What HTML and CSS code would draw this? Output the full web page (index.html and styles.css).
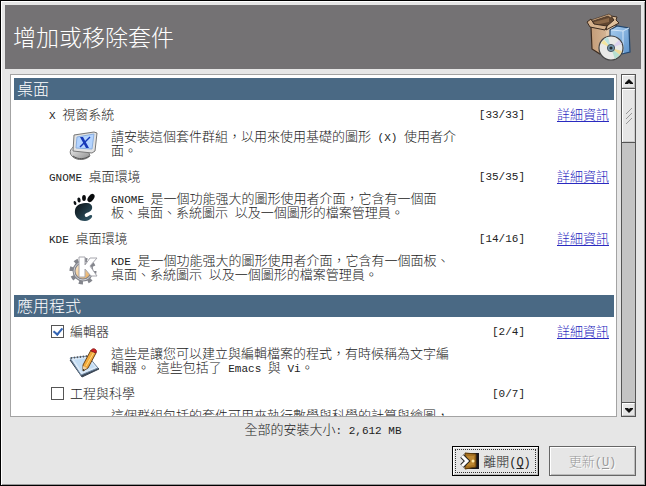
FILE: index.html
```html
<!DOCTYPE html>
<html lang="zh-TW">

<head>
  <meta charset="utf-8">
  <title>增加或移除套件</title>
  <link rel="stylesheet" href="styles.css">
</head>

<body>
  <main class="window">
    <header class="banner">
      <h1>增加或移除套件</h1>
      <svg class="banner-icon" viewBox="0 0 48 48" aria-hidden="true">
        <defs>
          <linearGradient id="box" x1="0" x2="1"><stop offset="0" stop-color="#c39c78"/><stop offset="1" stop-color="#dfc3a5"/></linearGradient>
          <linearGradient id="blue" x1="0" x2="1" y2="1"><stop offset="0" stop-color="#acd0f0"/><stop offset="1" stop-color="#5b92cc"/></linearGradient>
        </defs>
        <path d="M5 14 20 16 30 11 30 37 14 41 6 36Z" fill="url(#box)" stroke="#3d2c20" stroke-width="1.2"/>
        <path d="M20 17 29 12 29 30 20 36Z" fill="#dfc4a7"/>
        <path d="M5 8 23 2 30 8 20 15 5 13Z" fill="#60452f" stroke="#3d2c20"/>
        <path d="M8 9 23 5 23 9 9 12Z" fill="#8b6848"/>
        <path d="M1 9 5 6 8 11 21 13 19 17 4 14Z" fill="#d6b28d" stroke="#3d2c20"/>
        <path d="M21 13 28 7 25 3 31 4 30 7 33 10 20 17Z" fill="#e0c09b" stroke="#3d2c20"/>
        <path d="M5 7 23 1 26 3 25 5 22 3 7 8Z" fill="#cba680" stroke="#3d2c20" stroke-width=".6"/>
        <path d="M24 17 31 13 43 15 44 39 36 41 24 41Z" fill="url(#blue)" stroke="#23476e" stroke-width="1.2"/>
        <path d="M25 17 37 18 43 15M37 18V40" fill="none" stroke="#d2e5f7"/>
        <circle cx="25" cy="35" r="12" fill="#e9e9e7" stroke="#444" stroke-width="1.2"/>
        <path d="M25 35 15 30 18 27Z" fill="#f3e59e"/>
        <path d="M25 35 18 26 22 24Z" fill="#b9e2df"/>
        <path d="M25 35 33 27 36 31Z" fill="#dcd2ee"/>
        <path d="M25 35 36 38 34 42Z" fill="#efd997"/>
        <path d="M25 35 34 42 29 46Z" fill="#b7dfcf"/>
        <circle cx="25" cy="35" r="3.6" fill="#7598ae" stroke="#4b5661"/>
        <circle cx="25" cy="35" r="1.6" fill="#252b31"/>
      </svg>
    </header>

    <div class="content">
      <div class="browser">
        <div class="list">
          <section class="category">
            <h2>桌面</h2>

            <article class="group">
              <div class="group-head">
                <h3><span class="latin">X </span>視窗系統</h3>
                <span class="count">[33/33]</span>
                <a class="details" href="#x">詳細資訊</a>
              </div>
              <div class="group-body">
                <svg class="icon" viewBox="0 0 32 32" aria-hidden="true">
                  <defs>
                    <linearGradient id="stand" x2="1" y2="1"><stop offset="0" stop-color="#f4f4f4"/><stop offset="1" stop-color="#8b8b8b"/></linearGradient>
                  </defs>
                  <path d="M7 15C1 18 1 23 5 26 10 30 18 29 22 25L20 19Z" fill="url(#stand)" stroke="#777"/>
                  <path d="M5 25C10 29 18 28 21 25" fill="none" stroke="#555"/>
                  <path d="M6 4 26 1 29 2 27 20 24 22 5 20Z" fill="#e2e2e2" stroke="#777"/>
                  <path d="M9 6 26 3 24 18 8 17Z" fill="#b4d4ff" stroke="#8bafe0"/>
                  <path d="M12 6 15 6 21 17 18 17Z" fill="#1738b8"/>
                  <path d="M22 6 12 16" stroke="#1738b8" stroke-width="1.5"/>
                </svg>
                <p>請安裝這個套件群組，以用來使用基礎的圖形<span class="latin"> (X) </span>使用者介面。</p>
              </div>
            </article>

            <article class="group">
              <div class="group-head">
                <h3><span class="latin">GNOME </span>桌面環境</h3>
                <span class="count">[35/35]</span>
                <a class="details" href="#gnome">詳細資訊</a>
              </div>
              <div class="group-body">
                <svg class="icon" viewBox="0 0 32 32" aria-hidden="true">
                  <defs>
                    <linearGradient id="foot" y2="1"><stop offset="0" stop-color="#0c1115"/><stop offset="1" stop-color="#315a6b"/></linearGradient>
                  </defs>
                  <path d="M7 17C8 11 14 10 19 10 25 10 26 17 21 19 18 20 16 21 17 23 18 26 21 22 23 22 26 22 23 28 17 28 10 28 6 23 7 17Z" fill="url(#foot)"/>
                  <ellipse cx="23" cy="5" rx="2.8" ry="4.6" transform="rotate(35 23 5)" fill="#090b0d"/>
                  <ellipse cx="16" cy="5" rx="1.9" ry="3" fill="#090b0d"/>
                  <ellipse cx="11" cy="7" rx="1.6" ry="2.5" transform="rotate(-10 11 7)" fill="#0d1215"/>
                  <ellipse cx="7" cy="10" rx="1.3" ry="2.1" transform="rotate(-20 7 10)" fill="#0d1215"/>
                </svg>
                <p><span class="latin">GNOME </span>是一個功能强大的圖形使用者介面，它含有一個面板、桌面、系統圖示<span class="latin"> </span>以及一個圖形的檔案管理員。</p>
              </div>
            </article>

            <article class="group">
              <div class="group-head">
                <h3><span class="latin">KDE </span>桌面環境</h3>
                <span class="count">[14/16]</span>
                <a class="details" href="#kde">詳細資訊</a>
              </div>
              <div class="group-body">
                <svg class="icon" viewBox="0 0 32 32" aria-hidden="true">
                  <defs>
                    <linearGradient id="gear" y2="1"><stop offset="0" stop-color="#fff3dd"/><stop offset="1" stop-color="#e5a34f"/></linearGradient>
                  </defs>
                  <circle cx="15" cy="16" r="11.5" fill="none" stroke="#83858c" stroke-width="4" stroke-dasharray="4 5"/>
                  <circle cx="15" cy="16" r="9" fill="url(#gear)" stroke="#83858c" stroke-width="3"/>
                  <circle cx="15" cy="16" r="9" fill="none" stroke="#d0d1d6"/>
                  <path d="M11 2 17 2 17 10 22 3 29 3 22 11 29 21 23 21 17 14 17 22 11 22Z" fill="#fff" stroke="#a6a6ad"/>
                </svg>
                <p><span class="latin">KDE </span>是一個功能强大的圖形使用者介面，它含有一個面板、桌面、系統圖示<span class="latin"> </span>以及一個圖形的檔案管理員。</p>
              </div>
            </article>
          </section>

          <section class="category">
            <h2>應用程式</h2>

            <article class="group">
              <div class="group-head">
                <input type="checkbox" id="editors" checked>
                <label for="editors">編輯器</label>
                <span class="count">[2/4]</span>
                <a class="details" href="#editors">詳細資訊</a>
              </div>
              <div class="group-body">
                <svg class="icon" viewBox="0 0 32 32" aria-hidden="true">
                  <path d="M2 12 18 9 31 21 14 29Z" fill="#3a4655" stroke="#3a4655"/>
                  <path d="M2 10 20 8 30 20 13 27Z" fill="#dceaf8" stroke="#7089a3"/>
                  <path d="M6 12 19 10 27 19 14 24Z" fill="#c3ddf4"/>
                  <path d="M3 10 19 8" stroke="#555" stroke-width="2" stroke-dasharray="1 2"/>
                  <path d="M15 17 23 2 28 5 20 20 15 23Z" fill="#f2aa3c" stroke="#6b451b"/>
                  <path d="M18 18 26 4" stroke="#ffdc83"/>
                  <path d="M23 3C24 -1 30 1 28 5Z" fill="#d72222" stroke="#8c2020"/>
                  <path d="M15 18 19 20 15 23Z" fill="#ead1a7"/>
                  <path d="M15 21V23L17 22Z" fill="#111"/>
                </svg>
                <p>這些是讓您可以建立與編輯檔案的程式，有時候稱為文字編輯器。<span class="latin"> </span>這些包括了<span class="latin"> Emacs </span>與<span class="latin"> Vi</span>。</p>
              </div>
            </article>

            <article class="group">
              <div class="group-head">
                <input type="checkbox" id="science">
                <label for="science">工程與科學</label>
                <span class="count">[0/7]</span>
                <span class="details"></span>
              </div>
              <div class="group-body">
                <span class="icon"></span>
                <p>這個群組包括的套件可用來執行數學與科學的計算與繪圖，</p>
              </div>
            </article>
          </section>
        </div>

        <div class="scrollbar">
          <button type="button" class="arrow" aria-label="向上捲動">
            <svg viewBox="0 0 8 6"><path d="M4 0 8 4V5H5L4 4 3 5H0V4Z"/></svg>
          </button>
          <div class="track"><div class="thumb">
            <svg viewBox="0 0 8 18"><path d="M1 7 7 1M1 12 7 6M1 17 7 11"/></svg>
          </div></div>
          <button type="button" class="arrow" aria-label="向下捲動">
            <svg viewBox="0 0 8 6"><path d="M4 6 8 2V1H5L4 2 3 1H0V2Z"/></svg>
          </button>
        </div>
      </div>

      <p class="total">全部的安裝大小<span class="latin">: 2,612 MB</span></p>

      <div class="actions">
        <button type="button" class="btn btn-default">
          <svg class="btn-icon" viewBox="0 0 20 18" aria-hidden="true">
            <path d="M5 1H19V17H5Z" fill="#17151c"/>
            <path d="M5 1 16 2V15L5 17Z" fill="#a87222" stroke="#5d3c0c"/>
            <path d="M7 4 14 4V13L7 14Z" fill="#bd8731"/>
            <circle cx="13" cy="9" r="1.5" fill="#ffe7a7"/>
            <path d="M2 4 7 9 2 14" fill="none" stroke="#222" stroke-width="5"/>
            <path d="M2 4 7 9 2 14" fill="none" stroke="#fff" stroke-width="3"/>
          </svg>
          <span>離開<span class="latin">(<u>Q</u>)</span></span>
        </button>
        <button type="button" class="btn" disabled>
          <span>更新<span class="latin">(<u>U</u>)</span></span>
        </button>
      </div>
    </div>
  </main>
</body>

</html>
```

FILE: styles.css
```css
* {
  box-sizing: border-box;
}

body {
  margin: 0;
  font-family: "Noto Sans CJK TC", sans-serif;
  font-size: 13px;
  font-weight: 300;
  line-height: 14px;
  color: #222;
}

h1,
h2,
h3,
p {
  margin: 0;
  font-weight: 300;
}

.latin,
.count {
  font-family: "Liberation Mono", monospace;
  font-size: 11px;
  white-space: pre-wrap;
}

/* keeps the smaller font from making the mixed lines taller */
.latin {
  line-height: 1px;
}

.window {
  display: flex;
  flex-direction: column;
  height: 100vh;
  padding: 3px;
  background-color: #e6e6e6;
  border: 1px solid #000;
  box-shadow: inset 1px 1px #fff, inset -1px -1px #999;
}

.banner {
  display: flex;
  align-items: center;
  justify-content: space-between;
  height: 64px;
  margin: 1px 1px 0;
  padding: 0 7px 0 8px;
  background-color: #747274;
  flex-shrink: 0;
}

h1 {
  color: #fff;
  font-size: 23px;
  line-height: 28px;
  padding-bottom: 2px;
}

.banner-icon {
  width: 48px;
  height: 48px;
}

.content {
  display: flex;
  flex-direction: column;
  flex: 1;
  min-height: 0;
  padding: 5px 6px 6px;
}

.browser {
  display: flex;
  flex: 1;
  gap: 4px;
  min-height: 0;
}

.list {
  flex: 1;
  overflow: hidden;
  padding: 3px 2px 3px 3px;
  background-color: #fff;
  border: 1px solid #a3a3a3;
}

.category {
  padding-bottom: 7px;
}

h2 {
  margin-bottom: 2px;
  padding: 0 3px 1px;
  background-color: #4a6984;
  color: #fff;
  font-size: 16px;
  line-height: 21px;
}

.group {
  height: 62px;
  padding-right: 5px;
}

.group-head {
  display: flex;
  align-items: center;
  height: 25px;
  padding-left: 35px;
}

h3 {
  font-size: 13px;
}

h3,
label,
.details {
  padding-bottom: 1px;
}

.count {
  margin-left: auto;
}

.details {
  width: 84px;
  text-align: right;
  color: #2a2ac0;
  text-underline-offset: 2px;
}

.group-head input {
  appearance: none;
  width: 13px;
  height: 13px;
  margin: 0 6px 0 2px;
  background-color: #fff;
  border: 1px solid #555;
}

.group-head input:checked {
  display: grid;
  place-items: center;
}

.group-head input:checked::before {
  content: "";
  width: 4px;
  height: 7px;
  margin-bottom: 2px;
  border: solid #3465b4;
  border-width: 0 2px 2px 0;
  transform: rotate(40deg);
}

.group-body {
  display: flex;
  gap: 11px;
  padding: 2px 0 0 54px;
}

.icon {
  flex-shrink: 0;
  width: 32px;
  height: 32px;
  margin-top: 2px;
}

.group-body p {
  max-width: 350px;
}

.scrollbar {
  display: flex;
  flex-direction: column;
  width: 15px;
  border: 1px solid #555;
}

.arrow {
  display: flex;
  align-items: center;
  justify-content: center;
  height: 13px;
  padding: 0;
  background-color: #e6e6e6;
  border: 1px solid;
  border-color: #fff #bbb #bbb #fff;
}

.arrow svg {
  width: 8px;
  height: 6px;
  fill: #111;
}

.track {
  flex: 1;
  background-color: #c4c4c4;
  border-bottom: 1px solid #555;
}

.thumb {
  display: flex;
  align-items: center;
  justify-content: center;
  height: 55px;
  background-color: #e6e6e6;
  border: solid #555;
  border-width: 1px 0;
  box-shadow: inset 1px 1px #fff, inset -1px -1px #ccc;
}

.thumb svg {
  width: 8px;
  height: 18px;
  stroke: #999;
}

.total {
  padding: 5px 0 10px;
  text-align: center;
}

.actions {
  display: flex;
  justify-content: flex-end;
  gap: 10px;
}

.btn {
  display: flex;
  align-items: center;
  justify-content: center;
  gap: 3px;
  width: 87px;
  height: 30px;
  padding: 0;
  background-color: #e6e6e6;
  border: 1px solid #666;
  box-shadow: inset 1px 1px #fff, inset -1px -1px #bbb;
  color: #222;
  font: inherit;
}

.btn .latin {
  font-size: 12px;
}

.btn u {
  text-underline-offset: 2px;
}

.btn-default {
  border-color: #000;
  outline: 1px dotted #333;
  outline-offset: -4px;
}

.btn:disabled {
  color: #999;
  text-shadow: 1px 1px #fff;
}

.btn-icon {
  width: 20px;
  height: 18px;
}
```
